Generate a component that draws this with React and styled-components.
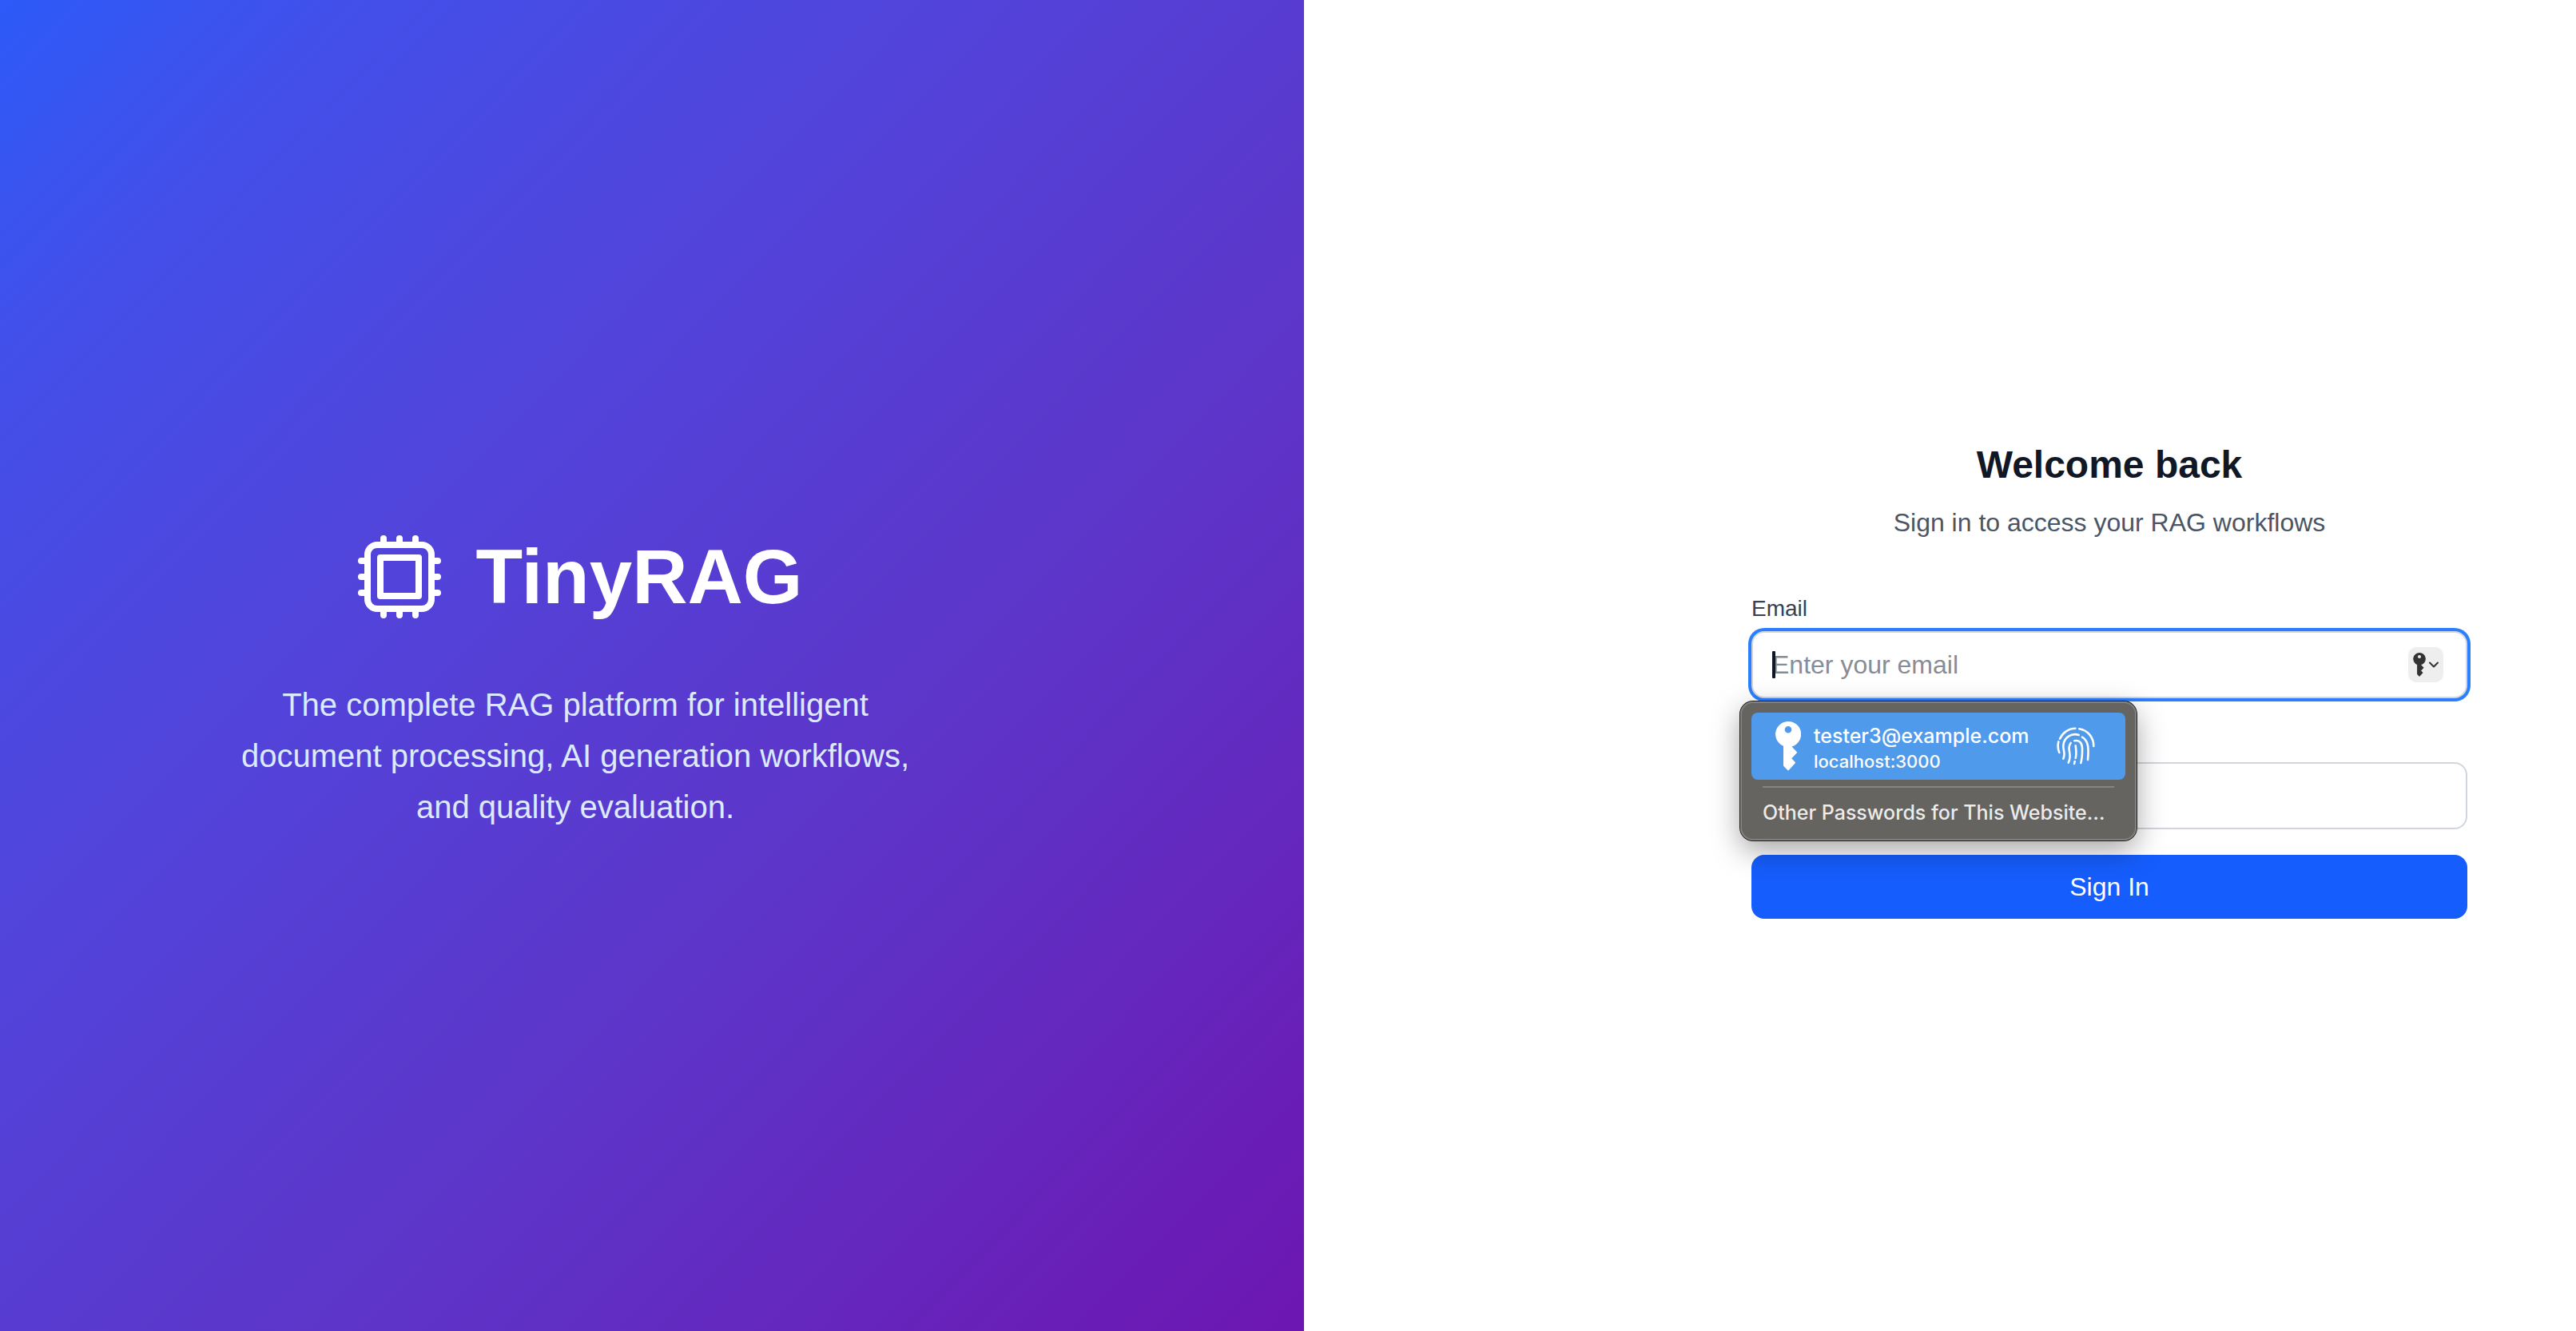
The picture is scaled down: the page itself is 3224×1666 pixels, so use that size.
import React from "react";
import styled, { createGlobalStyle } from "styled-components";

const sans = `"Liberation Sans", Arial, Helvetica, sans-serif`;
const system = `Inter, "Liberation Sans", sans-serif`;

const GlobalStyle = createGlobalStyle`
  *, *::before, *::after { box-sizing: border-box; }
  body {
    margin: 0;
    background: #fff;
    color: #101828;
    font-family: ${sans};
    font-size: 32px;
    line-height: 48px;
  }
  h1, h2, p { margin: 0; }
  button, input { font: inherit; color: inherit; }
`;

const Page = styled.div`
  display: grid;
  grid-template-columns: 204fr 199fr;
  min-height: 100vh;
`;

const Hero = styled.section`
  display: flex;
  flex-direction: column;
  align-items: center;
  justify-content: center;
  gap: 64px;
  padding: 34px 192px 0 0;
  background: linear-gradient(
    to bottom right,
    #2c5af8 0%,
    #4250ea 13%,
    #4f46dd 32%,
    #593bd0 52%,
    #6030c4 70%,
    #6d16b1 100%
  );
  color: #fff;
`;

const Brand = styled.div`
  display: flex;
  align-items: center;
  gap: 32px;
`;

const ChipIcon = styled.svg`
  width: 128px;
  height: 128px;
`;

const BrandName = styled.h1`
  font-size: 96px;
  line-height: 96px;
  font-weight: 700;
`;

const Tagline = styled.p`
  max-width: 896px;
  font-size: 40px;
  line-height: 64px;
  color: #dbeafe;
  text-align: center;
`;

const FormSide = styled.main`
  display: flex;
  align-items: center;
  justify-content: flex-end;
  padding: 34px 136px 0 0;
`;

const FormColumn = styled.div`
  display: flex;
  flex-direction: column;
  gap: 64px;
  width: 100%;
  max-width: 896px;
`;

const Heading = styled.header`
  display: grid;
  gap: 16px;
  text-align: center;
`;

const Title = styled.h2`
  font-size: 48px;
  line-height: 64px;
  font-weight: 700;
`;

const Subtitle = styled.p`
  color: #4a5565;
`;

const Form = styled.form`
  display: grid;
  gap: 32px;
`;

const Field = styled.div`
  display: grid;
  gap: 8px;
`;

const Label = styled.label`
  font-size: 28px;
  line-height: 40px;
  color: #364153;
`;

const InputWrap = styled.div`
  position: relative;
  display: grid;
`;

const Input = styled.input`
  width: 100%;
  height: 84px;
  padding: 16px 24px;
  border: 2px solid #d1d5dc;
  border-radius: 16px;
  background: #fff;
  outline: none;
  box-shadow: ${(p) => (p.$active ? "0 0 0 4px #2b7fff" : "none")};

  &::placeholder {
    color: #888c94;
    opacity: 1;
  }
`;

const Caret = styled.span`
  position: absolute;
  top: 25px;
  left: 26px;
  width: 4px;
  height: 34px;
  border-radius: 1px;
  background: #101828;
`;

const KeyButton = styled.button`
  position: absolute;
  top: 20px;
  right: 30px;
  display: flex;
  align-items: center;
  justify-content: center;
  gap: 4px;
  width: 44px;
  height: 44px;
  padding: 0;
  border: 0;
  border-radius: 10px;
  background: #eee;
  color: #333;
`;

const SubmitButton = styled.button`
  height: 80px;
  border: 0;
  border-radius: 16px;
  background: #155dfc;
  color: #fff;
`;

const Popup = styled.div`
  position: absolute;
  z-index: 1;
  top: 88px;
  left: -14px;
  width: 496px;
  padding: 14px 14px 4px;
  border-radius: 16px;
  background: #656461;
  box-shadow:
    inset 0 0 0 2px #82817e,
    0 0 0 1px #1c1c1c,
    0 12px 36px rgba(0, 0, 0, 0.36);
  font-family: ${system};
  font-weight: 500;
`;

const Suggestion = styled.button`
  display: flex;
  align-items: center;
  width: 100%;
  height: 84px;
  padding: 0 38px 0 30px;
  border: 0;
  border-radius: 8px;
  background: #4f9aeb;
  color: #fff;
  text-align: left;
`;

const SuggestionText = styled.span`
  display: grid;
  flex: 1;
  gap: 2px;
  margin-left: 16px;
  padding-top: 4px;
`;

const Account = styled.span`
  font-size: 25px;
  line-height: 32px;
`;

const Site = styled.span`
  font-size: 22px;
  line-height: 28px;
`;

const Divider = styled.hr`
  height: 2px;
  margin: 8px 14px 0;
  border: 0;
  background: #868582;
`;

const OtherPasswords = styled.button`
  display: block;
  width: 100%;
  height: 62px;
  padding: 0 14px;
  border: 0;
  background: transparent;
  color: #ecebea;
  font-size: 25px;
  line-height: 32px;
  text-align: left;
  white-space: nowrap;
`;

function KeyGlyph({ width, height }) {
  return (
    <svg width={width} height={height} viewBox="0 0 32 62" fill="currentColor" aria-hidden="true">
      <path
        fillRule="evenodd"
        d="M16 0a16 16 0 0 1 4.500 31.400l6.200 6.500a1.200 1.200 0 0 1 0 1.700L20.300 46.300l4.200 4.400a1.300 1.300 0 0 1 0 1.900L17 60.800a1.400 1.400 0 0 1-2 0L10.600 56.300a2 2 0 0 1-.6-1.400V30.800A16 16 0 0 1 16 0Zm0 6a4.300 4.300 0 1 0 0 8.600A4.300 4.300 0 0 0 16 6Z"
      />
    </svg>
  );
}

function Fingerprint() {
  return (
    <svg
      width="48"
      height="48"
      viewBox="0 0 48 48"
      fill="none"
      stroke="currentColor"
      strokeWidth="2.6"
      strokeLinecap="round"
      aria-hidden="true"
    >
      <path d="M4 14.700C7.500 7 15 1.700 23.300 1.700" />
      <path d="M28.300 2.300C39 4 46.300 13 46.300 24" />
      <path d="M2.300 18.300C1.200 23 1.500 28 3.300 32" />
      <path d="M8.300 39.700C11.500 33 8 29 8.300 23.500C8.800 13 19 7 27.700 10" />
      <path d="M32 12.700C39.500 17 40.500 26 39 41" />
      <path d="M14.700 44.700C19.500 35 14 30 15.800 24C16.200 22.300 16.800 21 17.700 20" />
      <path d="M22.300 17.300C28 16 31.700 19.500 32 26C32.200 33 32 38.500 30.300 45" />
      <path d="M23.700 23.300C24.500 29 25 34 23.700 39" />
      <path d="M22.700 43L22 46" />
    </svg>
  );
}

export default function App() {
  return (
    <>
      <GlobalStyle />
      <Page>
        <Hero>
          <Brand>
            <ChipIcon
              viewBox="0 0 24 24"
              fill="none"
              stroke="currentColor"
              strokeWidth="1.5"
              strokeLinecap="round"
              strokeLinejoin="round"
              aria-hidden="true"
            >
              <path d="M8.25 3v1.5M4.5 8.25H3m18 0h-1.5M4.5 12H3m18 0h-1.5m-15 3.75H3m18 0h-1.5M8.25 19.5V21M12 3v1.5m0 15V21m3.75-18v1.5m0 15V21m-9-1.5h10.5a2.25 2.25 0 0 0 2.25-2.25V6.75a2.25 2.25 0 0 0-2.25-2.25H6.75A2.25 2.25 0 0 0 4.5 6.75v10.5a2.25 2.25 0 0 0 2.25 2.25Zm.75-12h9v9h-9v-9Z" />
            </ChipIcon>
            <BrandName>TinyRAG</BrandName>
          </Brand>
          <Tagline>
            The complete RAG platform for intelligent document processing, AI generation workflows,
            and quality evaluation.
          </Tagline>
        </Hero>

        <FormSide>
          <FormColumn>
            <Heading>
              <Title>Welcome back</Title>
              <Subtitle>Sign in to access your RAG workflows</Subtitle>
            </Heading>

            <Form onSubmit={(e) => e.preventDefault()}>
              <Field>
                <Label htmlFor="email">Email</Label>
                <InputWrap>
                  <Input id="email" type="email" placeholder="Enter your email" $active />
                  <Caret />
                  <KeyButton type="button" aria-label="Saved passwords">
                    <KeyGlyph width={16} height={30} />
                    <svg
                      width="12"
                      height="8"
                      viewBox="0 0 12 8"
                      fill="none"
                      stroke="currentColor"
                      strokeWidth="2"
                      strokeLinecap="round"
                      strokeLinejoin="round"
                      aria-hidden="true"
                    >
                      <path d="M1 1.500l5 5 5-5" />
                    </svg>
                  </KeyButton>
                  <Popup>
                    <Suggestion type="button">
                      <KeyGlyph width={32} height={62} />
                      <SuggestionText>
                        <Account>tester3@example.com</Account>
                        <Site>localhost:3000</Site>
                      </SuggestionText>
                      <Fingerprint />
                    </Suggestion>
                    <Divider />
                    <OtherPasswords type="button">Other Passwords for This Website…</OtherPasswords>
                  </Popup>
                </InputWrap>
              </Field>

              <Field>
                <Label htmlFor="password">Password</Label>
                <Input id="password" type="password" />
              </Field>

              <SubmitButton type="submit">Sign In</SubmitButton>
            </Form>
          </FormColumn>
        </FormSide>
      </Page>
    </>
  );
}
